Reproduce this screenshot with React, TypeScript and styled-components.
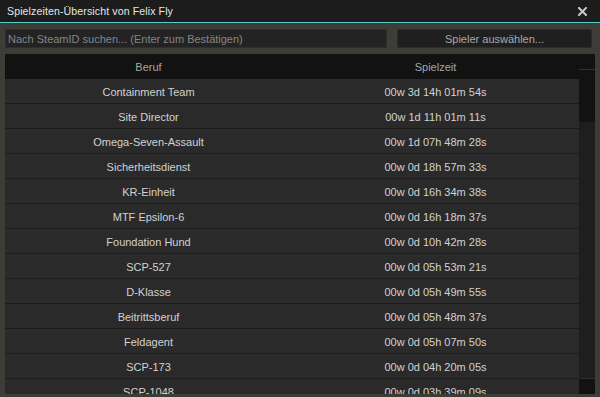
import React from 'react';
import styled, { createGlobalStyle } from 'styled-components';

const GlobalStyle = createGlobalStyle`
  html, body {
    margin: 0;
    padding: 0;
    background: #3d3c36;
    overflow: hidden;
  }
  * { box-sizing: border-box; }
`;

const FONT = `"Liberation Sans", "DejaVu Sans", sans-serif`;

const Frame = styled.div`
  width: 600px;
  height: 397px;
  background: #3d3c36;
  display: flex;
  flex-direction: column;
  font-family: ${FONT};
  overflow: hidden;
`;

const TitleBar = styled.div`
  height: 23px;
  flex: none;
  background: #1c1c1c;
  border-bottom: 1px solid #56cfc6;
  display: flex;
  align-items: center;
  justify-content: space-between;
  padding: 0 13px 0 7px;
`;

const Title = styled.span`
  color: #e6e6e6;
  font-size: 10.6px;
  letter-spacing: 0.1px;
`;

const CloseIcon = styled.svg`
  width: 9px;
  height: 9px;
  display: block;
`;

const Toolbar = styled.div`
  display: flex;
  gap: 10px;
  padding: 6px 8px 0 5px;
  height: 25px;
  flex: none;
`;

const SearchInput = styled.div`
  width: 382px;
  height: 19px;
  background: #232323;
  border: 1px solid #2e2e2b;
  color: #858585;
  font-size: 11px;
  display: flex;
  align-items: center;
  padding-left: 2px;
  white-space: nowrap;
`;

const SelectButton = styled.div`
  flex: 1;
  height: 19px;
  background: #1f1f1f;
  border: 1px solid #2c2c29;
  color: #a9a9a9;
  font-size: 11px;
  display: flex;
  align-items: center;
  justify-content: center;
`;

const ListView = styled.div`
  margin: 6px 5px 0 5px;
  height: 340px;
  flex: none;
  display: flex;
  background: #121212;
  overflow: hidden;
`;

const Table = styled.div`
  width: 574px;
  display: flex;
  flex-direction: column;
`;

const Row = styled.div<{ $header?: boolean }>`
  height: 25px;
  flex: none;
  display: grid;
  grid-template-columns: 287px 287px;
  align-items: center;
  padding-top: 1px;
  background: ${p => (p.$header ? '#121212' : '#2a2a2a')};
  border-bottom: 1px solid ${p => (p.$header ? '#121212' : '#1c1c1c')};
  color: ${p => (p.$header ? '#a6a6a6' : '#d2d2d2')};
  font-size: 11px;
`;

const Cell = styled.span`
  text-align: center;
  white-space: nowrap;
`;

const ScrollBar = styled.div`
  width: 16px;
  display: flex;
  flex-direction: column;
`;

const ScrollTop = styled.div`
  height: 16px;
  flex: none;
  border-bottom: 1px solid #333333;
`;

const Grip = styled.div<{ $offset: number; $size: number }>`
  margin-top: ${p => p.$offset}px;
  height: ${p => p.$size}px;
  flex: none;
  background: #1e1e1e;
  border-bottom: 1px solid #2e2e2e;
`;

const jobs: [string, string][] = [
  ['Containment Team', '00w 3d 14h 01m 54s'],
  ['Site Director', '00w 1d 11h 01m 11s'],
  ['Omega-Seven-Assault', '00w 1d 07h 48m 28s'],
  ['Sicherheitsdienst', '00w 0d 18h 57m 33s'],
  ['KR-Einheit', '00w 0d 16h 34m 38s'],
  ['MTF Epsilon-6', '00w 0d 16h 18m 37s'],
  ['Foundation Hund', '00w 0d 10h 42m 28s'],
  ['SCP-527', '00w 0d 05h 53m 21s'],
  ['D-Klasse', '00w 0d 05h 49m 55s'],
  ['Beitrittsberuf', '00w 0d 05h 48m 37s'],
  ['Feldagent', '00w 0d 05h 07m 50s'],
  ['SCP-173', '00w 0d 04h 20m 05s'],
  ['SCP-1048', '00w 0d 03h 39m 09s'],
];

const App: React.FC = () => {
  return (
    <Frame>
      <GlobalStyle />
      <TitleBar>
        <Title>Spielzeiten-Übersicht von Felix Fly</Title>
        <CloseIcon viewBox="0 0 9 9">
          <path d="M1 1 L8 8 M8 1 L1 8" stroke="#c8c8c8" strokeWidth="2" strokeLinecap="square" />
        </CloseIcon>
      </TitleBar>
      <Toolbar>
        <SearchInput>Nach SteamID suchen... (Enter zum Bestätigen)</SearchInput>
        <SelectButton>Spieler auswählen...</SelectButton>
      </Toolbar>
      <ListView>
        <Table>
          <Row $header>
            <Cell>Beruf</Cell>
            <Cell>Spielzeit</Cell>
          </Row>
          {jobs.map(([job, time]) => (
            <Row key={job}>
              <Cell>{job}</Cell>
              <Cell>{time}</Cell>
            </Row>
          ))}
        </Table>
        <ScrollBar>
          <ScrollTop />
          <Grip $offset={52} $size={257} />
        </ScrollBar>
      </ListView>
    </Frame>
  );
};

export default App;
